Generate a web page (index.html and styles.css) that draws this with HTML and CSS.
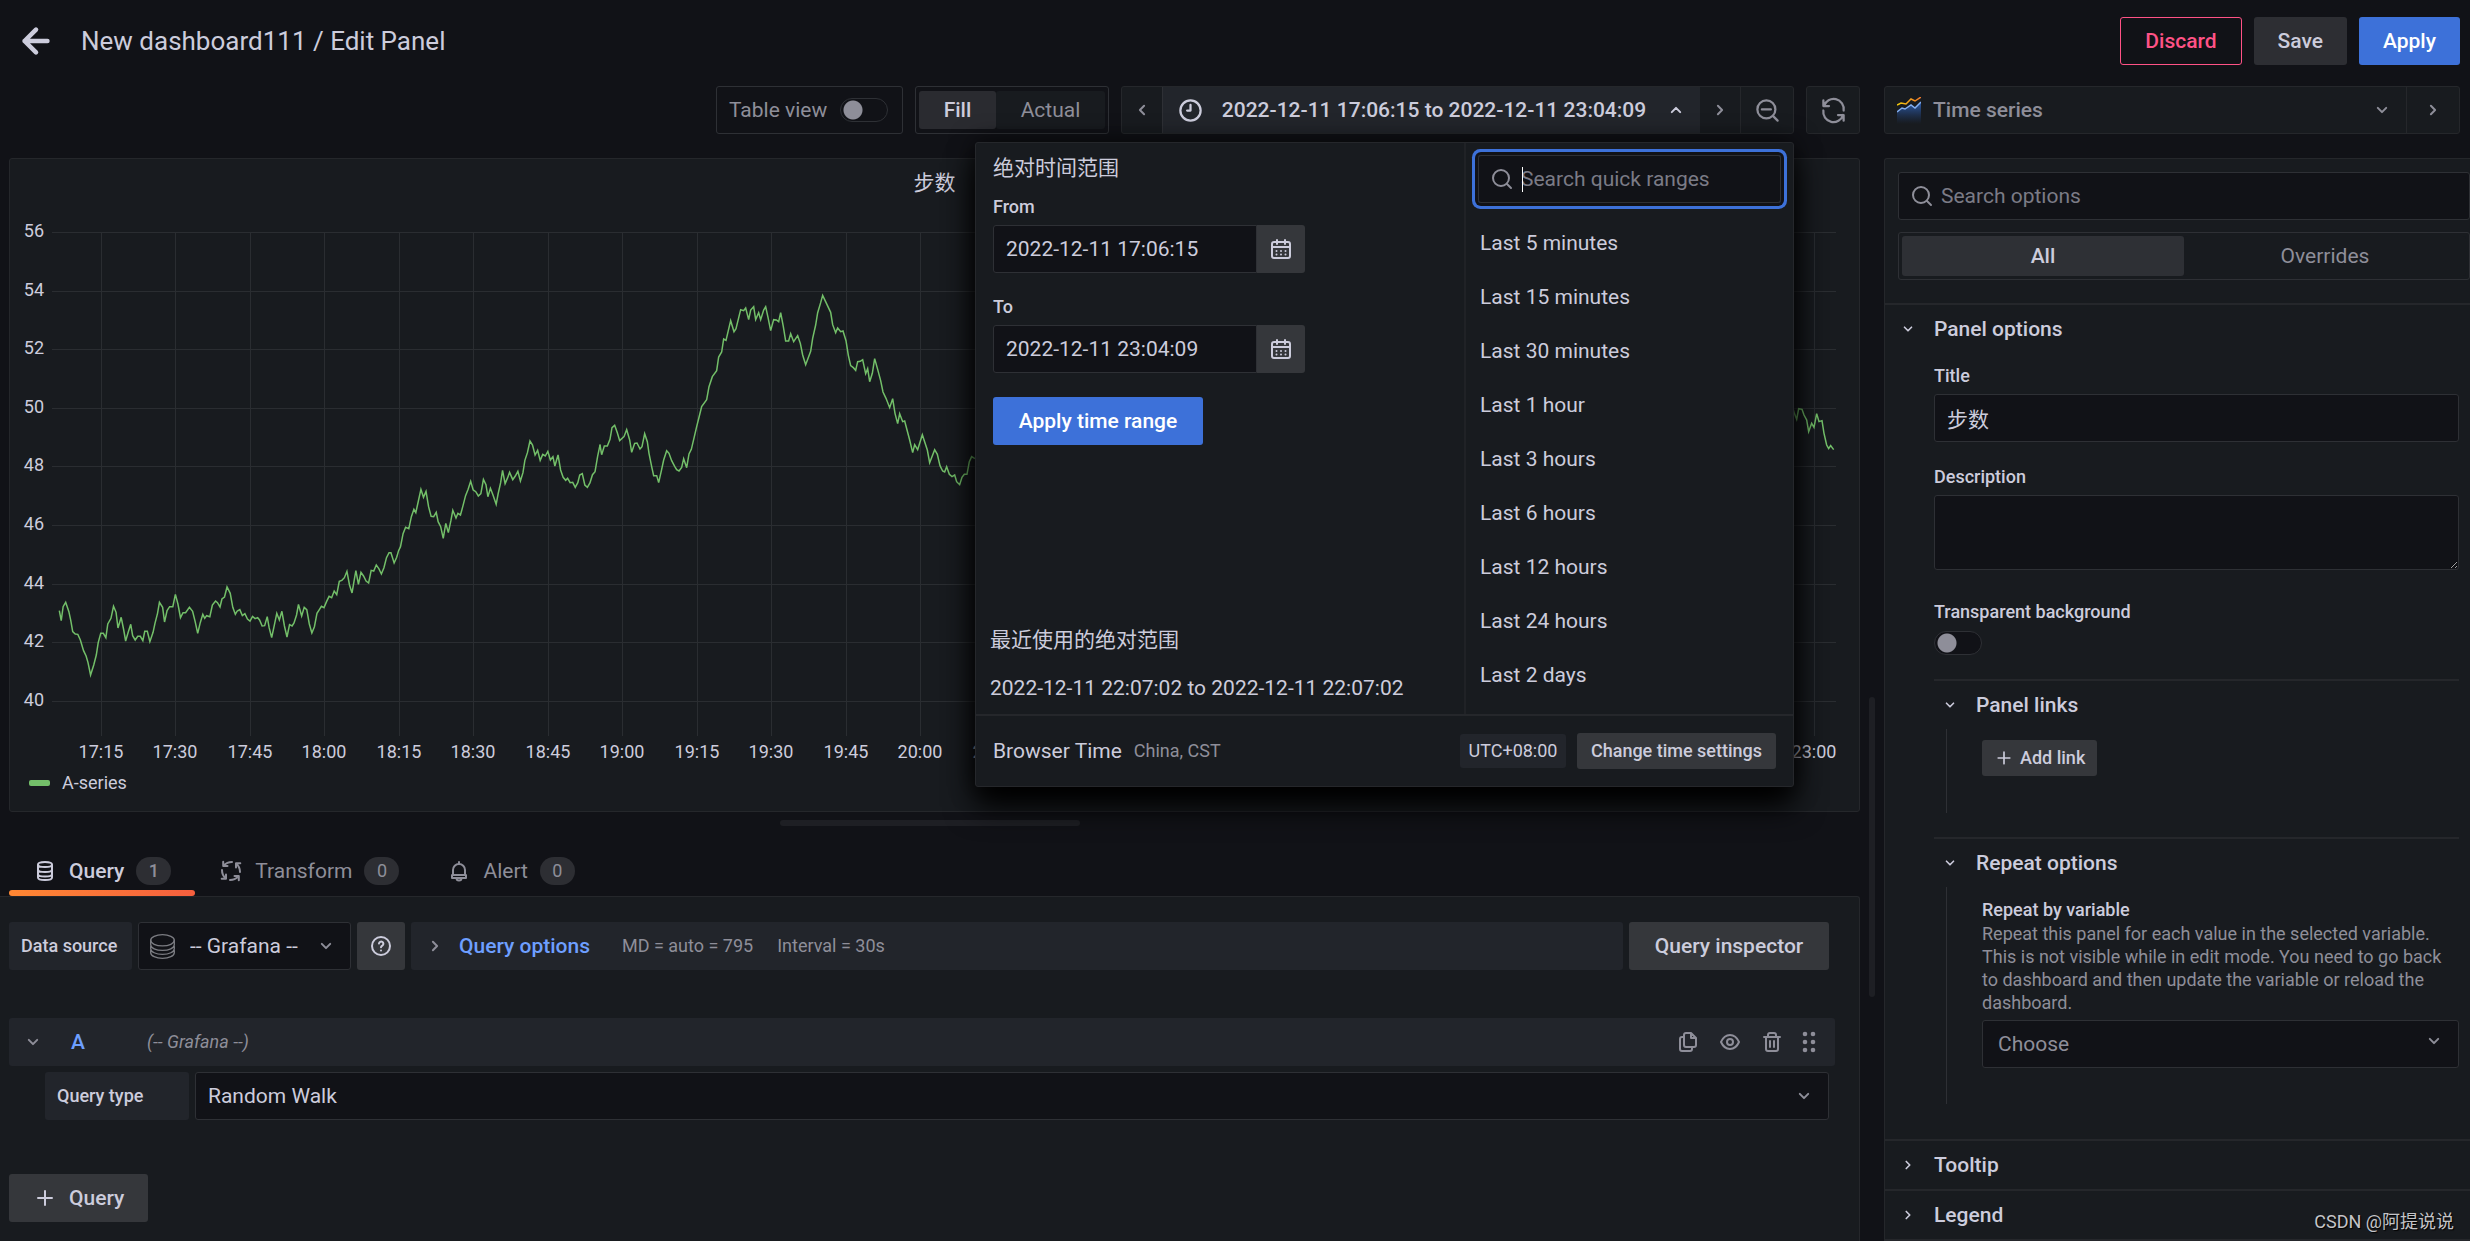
FILE: index.html
```html
<!DOCTYPE html>
<html lang="en">
<head>
<meta charset="utf-8">
<meta name="viewport" content="width=device-width, initial-scale=1">
<title>New dashboard111 / Edit Panel</title>
<link rel="stylesheet" href="styles.css">
</head>
<body>
<svg class="sprite" aria-hidden="true">
  <symbol id="i-down" viewBox="0 0 24 24"><path d="M7.8 9.9 12 14.1l4.200-4.200"/></symbol>
  <symbol id="i-up" viewBox="0 0 24 24"><path d="M7.800 14.100 12 9.900l4.200 4.200"/></symbol>
  <symbol id="i-right" viewBox="0 0 24 24"><path d="M9.900 7.800 14.100 12l-4.200 4.200"/></symbol>
  <symbol id="i-left" viewBox="0 0 24 24"><path d="M14.100 7.800 9.900 12l4.200 4.200"/></symbol>
  <symbol id="i-back" viewBox="5 5 14 14"><path d="M17 12H7m5-5-5 5 5 5"/></symbol>
  <symbol id="i-clock" viewBox="0 0 24 24"><circle cx="12" cy="12" r="9"/><path d="M12 7v5H9"/></symbol>
  <symbol id="i-search" viewBox="0 0 24 24"><circle cx="11" cy="11" r="8"/><path d="m17 17 4 4"/></symbol>
  <symbol id="i-zoomout" viewBox="0 0 24 24"><circle cx="11" cy="11" r="8"/><path d="m17 17 4 4M7 11h8"/></symbol>
  <symbol id="i-sync" viewBox="0 0 24 24"><path d="M3 3v5h5M3.500 8A9 9 0 0 1 21 12M3 12a9 9 0 0 0 17.500 4M16 16h5v5"/></symbol>
  <symbol id="i-calendar" viewBox="0 0 24 24"><path d="M5 5h14a2 2 0 0 1 2 2v12a2 2 0 0 1-2 2H5a2 2 0 0 1-2-2V7a2 2 0 0 1 2-2ZM3 10h18M8 3v4M16 3v4"/><path d="M7.500 14h.01M12 14h.01M16.500 14h.01M7.500 17.500h.01M12 17.500h.01M16.500 17.500h.01"/></symbol>
  <symbol id="i-database" viewBox="0 0 24 24"><path d="M5 5.500C5 4 8 3 12 3s7 1 7 2.500S16 8 12 8 5 7 5 5.500ZM5 5.500v13C5 20 8 21 12 21s7-1 7-2.500v-13M5 10.500c0 1.500 3 2.500 7 2.500s7-1 7-2.500M5 15c0 1.500 3 2.500 7 2.500s7-1 7-2.500"/></symbol>
  <symbol id="i-process" viewBox="0 0 24 24">
    <path id="turn" d="M4.200 2.700V7h4.300M4.700 6.600C6.800 4.300 9.300 3 13 3"/>
    <use href="#turn" transform="rotate(90 12 12)"/>
    <use href="#turn" transform="rotate(180 12 12)"/>
    <use href="#turn" transform="rotate(270 12 12)"/>
  </symbol>
  <symbol id="i-bell" viewBox="0 0 24 24"><path d="M12 4V3M6 16v-5a6 6 0 0 1 12 0v5M5 16h14v3H5ZM9.500 19a2.500 2.500 0 0 0 5 0"/></symbol>
  <symbol id="i-help" viewBox="0 0 24 24"><circle cx="12" cy="12" r="9"/><path d="M10 9.500a2.200 2.200 0 1 1 3.500 2c-.9.600-1.500.900-1.500 1.700M12 16.500h.01"/></symbol>
  <symbol id="i-copy" viewBox="0 0 24 24"><path d="M10 3h5l5 5v7a2 2 0 0 1-2 2h-8a2 2 0 0 1-2-2V5a2 2 0 0 1 2-2ZM15 3v5h5M8 7H6a2 2 0 0 0-2 2v10a2 2 0 0 0 2 2h8a2 2 0 0 0 2-2v-2"/></symbol>
  <symbol id="i-eye" viewBox="0 0 24 24"><path d="M3 12c2-4.500 5.200-7 9-7s7 2.500 9 7c-2 4.500-5.200 7-9 7s-7-2.500-9-7Z"/><circle cx="12" cy="12" r="3"/></symbol>
  <symbol id="i-trash" viewBox="0 0 24 24"><path d="M4 7h16M8 7V5a2 2 0 0 1 2-2h4a2 2 0 0 1 2 2v2M6 7v12a2 2 0 0 0 2 2h8a2 2 0 0 0 2-2V7M10 11v6M14 11v6"/></symbol>
  <symbol id="i-drag" viewBox="0 0 24 24"><g fill="currentColor" stroke="none"><circle cx="8" cy="4" r="2.300"/><circle cx="16" cy="4" r="2.300"/><circle cx="8" cy="12" r="2.300"/><circle cx="16" cy="12" r="2.300"/><circle cx="8" cy="20" r="2.300"/><circle cx="16" cy="20" r="2.300"/></g></symbol>
  <symbol id="i-plus" viewBox="0 0 24 24"><path d="M12 5v14M5 12h14"/></symbol>
  <symbol id="i-stack" viewBox="0 0 24 24"><g stroke-width="1.200"><ellipse cx="12" cy="6.500" rx="10.500" ry="5"/><path d="M1.500 6.500v4c0 2.800 4.700 5 10.500 5s10.500-2.200 10.500-5v-4M1.500 12v2c0 2.800 4.700 5 10.500 5s10.500-2.200 10.500-5v-2M1.500 15.500v2c0 2.800 4.700 5 10.500 5s10.500-2.200 10.500-5v-2"/></g></symbol>
</svg>

<header class="topbar">
  <a class="back" href="#" aria-label="Back"><svg class="icon icon-xl"><use href="#i-back"/></svg></a>
  <h1 class="page-title">New dashboard111 / Edit Panel</h1>
  <div class="actions">
    <button class="btn btn-danger">Discard</button>
    <button class="btn btn-dark">Save</button>
    <button class="btn btn-primary">Apply</button>
  </div>
</header>

<main class="editor">
  <section class="left">
    <div class="toolbar">
      <label class="table-view">Table view <input class="switch" type="checkbox"></label>
      <div class="toggle-group">
        <button class="toggle active">Fill</button>
        <button class="toggle">Actual</button>
      </div>
      <div class="time-nav">
        <button class="nav-btn" aria-label="Earlier"><svg class="icon"><use href="#i-left"/></svg></button>
        <button class="nav-range"><svg class="icon icon-lg"><use href="#i-clock"/></svg><span>2022-12-11 17:06:15 to 2022-12-11 23:04:09</span><svg class="icon"><use href="#i-up"/></svg></button>
        <button class="nav-btn" aria-label="Later"><svg class="icon"><use href="#i-right"/></svg></button>
        <button class="nav-btn nav-zoom" aria-label="Zoom out"><svg class="icon icon-lg"><use href="#i-zoomout"/></svg></button>

        <div class="picker">
          <div class="picker-body">
            <div class="picker-abs">
              <h2 class="picker-title">绝对时间范围</h2>
              <label class="label" for="from">From</label>
              <div class="date-row"><input class="input" id="from" value="2022-12-11 17:06:15"><button class="cal" aria-label="Calendar"><svg class="icon"><use href="#i-calendar"/></svg></button></div>
              <label class="label" for="to">To</label>
              <div class="date-row"><input class="input" id="to" value="2022-12-11 23:04:09"><button class="cal" aria-label="Calendar"><svg class="icon"><use href="#i-calendar"/></svg></button></div>
              <button class="btn btn-primary btn-range">Apply time range</button>
              <div class="recent">
                <h2 class="picker-title">最近使用的绝对范围</h2>
                <a href="#">2022-12-11 22:07:02 to 2022-12-11 22:07:02</a>
              </div>
            </div>
            <div class="picker-quick">
              <div class="search focused"><svg class="icon"><use href="#i-search"/></svg><span class="caret"></span><input class="input" aria-label="Search quick ranges" placeholder="Search quick ranges"></div>
              <ul class="ranges">
                <li><a href="#">Last 5 minutes</a></li>
                <li><a href="#">Last 15 minutes</a></li>
                <li><a href="#">Last 30 minutes</a></li>
                <li><a href="#">Last 1 hour</a></li>
                <li><a href="#">Last 3 hours</a></li>
                <li><a href="#">Last 6 hours</a></li>
                <li><a href="#">Last 12 hours</a></li>
                <li><a href="#">Last 24 hours</a></li>
                <li><a href="#">Last 2 days</a></li>
              </ul>
            </div>
          </div>
          <div class="picker-foot">
            <span>Browser Time</span><span class="zone">China, CST</span>
            <span class="utc">UTC+08:00</span>
            <button class="btn btn-grey btn-small">Change time settings</button>
          </div>
        </div>
      </div>
      <button class="refresh" aria-label="Refresh"><svg class="icon icon-lg"><use href="#i-sync"/></svg></button>
    </div>

    <div class="panel">
      <h2 class="panel-title">步数</h2>
      <svg class="chart" viewBox="10 212 1849 554" role="img" aria-label="A-series">
        <path class="grid" d="M52 232.500H1836M52 291.500H1836M52 349.500H1836M52 408.500H1836M52 466.500H1836M52 525.500H1836M52 584.500H1836M52 642.500H1836M52 701.500H1836
          M101.500 232V736M175.500 232V736M250.500 232V736M324.500 232V736M399.500 232V736M473.500 232V736M548.500 232V736M622.500 232V736M697.500 232V736M771.500 232V736M846.500 232V736M920.500 232V736M995.500 232V736M1069.500 232V736M1144.500 232V736M1218.500 232V736M1293.500 232V736M1367.500 232V736M1442.500 232V736M1516.500 232V736M1591.500 232V736M1665.500 232V736M1740.500 232V736M1814.500 232V736"/>
        <g class="tick tick-y">
          <text x="44" y="237">56</text><text x="44" y="296">54</text><text x="44" y="354">52</text><text x="44" y="413">50</text><text x="44" y="471">48</text><text x="44" y="530">46</text><text x="44" y="589">44</text><text x="44" y="647">42</text><text x="44" y="706">40</text>
        </g>
        <g class="tick tick-x">
          <text x="101" y="758">17:15</text><text x="175" y="758">17:30</text><text x="250" y="758">17:45</text><text x="324" y="758">18:00</text><text x="399" y="758">18:15</text><text x="473" y="758">18:30</text><text x="548" y="758">18:45</text><text x="622" y="758">19:00</text><text x="697" y="758">19:15</text><text x="771" y="758">19:30</text><text x="846" y="758">19:45</text><text x="920" y="758">20:00</text><text x="995" y="758">20:15</text><text x="1814" y="758">23:00</text>
        </g>
        <g class="series">
          <polyline transform="translate(0 400) scale(.63776 .33333)" points="93,632 96,662 99,620 103,607 108,635 111,662 114,695 118,702 122,703 126,720 131,752 135,768 138,788 142,825 147,795 151,765 154,728 158,700 162,700 166,713 169,672 174,655 178,619 182,637 185,684 190,652 194,690 197,723 201,697 205,673 208,707 212,720 216,709 220,709 224,722 227,694 231,694 235,725 240,697 243,670 247,640 250,607 255,622 258,666 262,632 266,620 271,620 275,583 279,612 283,653 287,638 291,638 297,622 302,634 306,665 310,700 314,668 318,643 321,655 324,647 329,650 333,615 338,603 341,608 345,621 348,597 352,591 356,561 361,580 365,622 369,643 372,633 376,629 380,647 384,641 388,657 392,663 396,649 400,656 404,653 407,660 411,678 415,677 419,650 422,683 426,713 430,677 434,640 438,660 442,634 446,678 450,711 454,674 458,678 461,669 465,645 468,613 473,648 477,622 481,629 485,672 489,699 493,680 497,640 501,628 504,619 508,623 512,605 516,589 520,593 524,573 528,584 532,544 536,541 540,533 544,514 548,555 552,579 555,545 558,512 562,553 566,517 570,528 574,543 578,549 582,511 586,513 590,495 594,506 598,522 602,503 606,473 610,458 613,458 618,489 622,472 625,452 628,440 632,401 636,382 641,386 645,350 649,328 652,338 656,303 660,268 664,292 668,274 672,320 676,349 680,350 684,337 687,365 691,380 695,415 699,370 703,398 707,362 710,331 715,354 718,340 722,345 726,317 730,287 734,268 738,244 742,270 746,275 750,288 754,281 758,238 762,254 765,290 769,265 773,285 778,313 781,282 785,248 788,211 792,251 796,233 799,217 804,239 808,228 812,214 816,243 820,218 823,181 827,158 831,123 835,135 839,165 843,151 847,181 851,163 855,168 859,154 863,180 867,170 870,198 875,165 879,210 883,232 887,241 890,235 894,248 898,247 902,262 906,248 909,225 913,221 917,255 921,262 925,249 929,224 933,215 937,170 941,133"/>
          <polyline transform="translate(600 280) scale(.33333)" points="0,495 5,524 13,498 22,498 30,478 36,443 44,436 52,458 59,482 72,470 80,449 89,480 95,517 104,490 111,489 120,507 126,500 134,461 142,485 147,520 155,560 161,587 170,587 176,608 185,568 191,540 200,512 207,520 215,542 224,559 230,569 237,573 245,562 251,536 260,563 267,522 274,508 283,470 290,440 298,408 305,380 320,359 327,320 337,290 350,272 356,231 365,216 371,177 378,181 392,122 402,155 408,146 422,89 431,92 437,84 446,119 452,90 461,80 467,119 476,98 482,119 491,90 497,80 504,112 512,152 521,119 529,120 536,125 542,98 550,140 557,183 566,183 572,161 581,185 593,167 601,190 608,225 617,254 632,214 638,175 647,135 653,98 662,68 668,46 692,97 698,134 707,158 713,144 722,155 729,153 738,182 745,226 752,257 760,263 767,271 773,245 781,244 788,239 797,281 803,266 809,305 817,280 824,236 833,268 842,302 849,336 858,355 869,383 878,356 885,400 893,431 899,401 908,425 914,423 929,480 938,518 944,494 953,509 967,464 982,510 989,548 1004,509 1012,523 1020,557 1028,573 1034,576 1040,560 1048,583 1056,590 1064,585 1070,605 1079,614 1086,592 1093,583 1101,583 1108,545 1115,530 1125,536"/>
          <polyline transform="translate(1460 60) scale(.33333)" points="995,1030 1003,1060 1010,1078 1016,1046 1026,1048 1032,1065 1040,1080 1046,1115 1055,1090 1062,1102 1070,1061 1077,1085 1086,1082 1092,1120 1100,1155 1106,1166 1112,1157 1121,1169"/>
        </g>
      </svg>
      <div class="legend"><span class="swatch"></span>A-series</div>
    </div>

    <div class="split-h"></div>

    <nav class="tabs">
      <a class="tab active" href="#"><svg class="icon"><use href="#i-database"/></svg>Query<span class="count">1</span></a>
      <a class="tab" href="#"><svg class="icon"><use href="#i-process"/></svg>Transform<span class="count">0</span></a>
      <a class="tab" href="#"><svg class="icon"><use href="#i-bell"/></svg>Alert<span class="count">0</span></a>
    </nav>

    <div class="query-pane">
      <div class="source-row">
        <label class="tag tag-ds" for="ds">Data source</label>
        <div class="select select-ds">
          <svg class="icon icon-lg lead"><use href="#i-stack"/></svg>
          <select class="input" id="ds"><option>-- Grafana --</option></select>
          <svg class="icon arrow"><use href="#i-down"/></svg>
        </div>
        <button class="help" aria-label="Help"><svg class="icon"><use href="#i-help"/></svg></button>
        <div class="options-bar">
          <svg class="icon"><use href="#i-right"/></svg>
          <a href="#">Query options</a>
          <span>MD = auto = 795</span>
          <span>Interval = 30s</span>
        </div>
        <button class="btn btn-grey btn-inspect">Query inspector</button>
      </div>

      <div class="query-head">
        <svg class="icon"><use href="#i-down"/></svg>
        <a class="ref-id" href="#">A</a>
        <em>(-- Grafana --)</em>
        <div class="query-tools">
          <button aria-label="Duplicate"><svg class="icon"><use href="#i-copy"/></svg></button>
          <button aria-label="Hide"><svg class="icon"><use href="#i-eye"/></svg></button>
          <button aria-label="Remove"><svg class="icon"><use href="#i-trash"/></svg></button>
        </div>
        <button class="grip" aria-label="Move"><svg class="icon"><use href="#i-drag"/></svg></button>
      </div>
      <div class="type-row">
        <label class="tag" for="qt">Query type</label>
        <div class="select">
          <select class="input" id="qt"><option>Random Walk</option></select>
          <svg class="icon arrow"><use href="#i-down"/></svg>
        </div>
      </div>
      <button class="btn btn-grey btn-add"><svg class="icon"><use href="#i-plus"/></svg>Query</button>
    </div>
  </section>

  <div class="split-v"><div class="handle"></div></div>

  <aside class="right">
    <div class="viz">
      <button class="viz-name">
        <svg class="viz-icon" viewBox="0 0 24 27">
          <defs>
            <linearGradient id="area" x1="0" y1="0" x2="0" y2="1"><stop offset="0" stop-color="#2f5fae"/><stop offset="1" stop-color="#1f3c70" stop-opacity="0"/></linearGradient>
            <linearGradient id="line" x1="0" y1="0" x2="1" y2="0"><stop offset="0" stop-color="#f2cc0c"/><stop offset="1" stop-color="#f0772b"/></linearGradient>
          </defs>
          <path fill="url(#area)" d="m0 15 5-4 3 1 6-4 4 3 6-6v22H0Z"/>
          <path fill="none" stroke="#84aff1" stroke-width="1.500" d="m0 15 5-4 3 1 6-4 4 3 6-6"/>
          <path fill="none" stroke="url(#line)" stroke-width="1.500" d="m0 8 4-2 5 1 5-5 4 2 6-4"/>
        </svg>
        Time series
        <svg class="icon"><use href="#i-down"/></svg>
      </button>
      <button class="viz-more" aria-label="Show suggestions"><svg class="icon"><use href="#i-right"/></svg></button>
    </div>

    <div class="options">
      <div class="options-head">
        <div class="search"><svg class="icon"><use href="#i-search"/></svg><input class="input" aria-label="Search options" placeholder="Search options"></div>
        <div class="toggle-group wide">
          <button class="toggle active">All</button>
          <button class="toggle">Overrides</button>
        </div>
      </div>

      <section class="group">
        <button class="group-title"><svg class="icon icon-sm"><use href="#i-down"/></svg>Panel options</button>
        <div class="group-body">
          <label class="label" for="title">Title</label>
          <input class="input" id="title" value="步数">
          <label class="label" for="desc">Description</label>
          <textarea class="input" id="desc"></textarea>
          <label class="label label-switch" for="transparent">Transparent background</label>
          <input class="switch" id="transparent" type="checkbox">

          <section class="subgroup">
            <button class="group-title"><svg class="icon icon-sm"><use href="#i-down"/></svg>Panel links</button>
            <div class="sub-body">
              <button class="btn btn-grey btn-small"><svg class="icon icon-sm"><use href="#i-plus"/></svg>Add link</button>
            </div>
          </section>
          <section class="subgroup">
            <button class="group-title"><svg class="icon icon-sm"><use href="#i-down"/></svg>Repeat options</button>
            <div class="sub-body">
              <label class="label" for="repeat">Repeat by variable</label>
              <p class="hint">Repeat this panel for each value in the selected variable. This is not visible while in edit mode. You need to go back to dashboard and then update the variable or reload the dashboard.</p>
              <div class="select muted">
                <select class="input" id="repeat"><option>Choose</option></select>
                <svg class="icon arrow"><use href="#i-down"/></svg>
              </div>
            </div>
          </section>
        </div>
      </section>
      <section class="group"><button class="group-title"><svg class="icon icon-sm"><use href="#i-right"/></svg>Tooltip</button></section>
      <section class="group"><button class="group-title"><svg class="icon icon-sm"><use href="#i-right"/></svg>Legend</button></section>
      <section class="group"></section>
    </div>
  </aside>
</main>
<div class="watermark">CSDN @阿提说说</div>
</body>
</html>
```
FILE: styles.css
```css
:root {
  --canvas: #111217;
  --surface: #181b1f;
  --raised: #22252b;
  --line: #25272b;
  --line-strong: #2e3035;
  --grey: #35373b;
  --text: #ccccdc;
  --muted: #8e8e99;
  --blue: #3d71d9;
  --link: #6e9fff;
}
* { box-sizing: border-box; }
body {
  margin: 0;
  height: 100vh;
  overflow: hidden;
  display: flex;
  flex-direction: column;
  background: var(--canvas);
  color: var(--text);
  font: 21px/32px Roboto, "Noto Sans CJK SC", sans-serif;
}
h1, h2, p, ul { margin: 0; padding: 0; font-size: inherit; font-weight: 400; list-style: none; }
a { color: inherit; text-decoration: none; }
button { margin: 0; padding: 0; border: 0; background: none; color: inherit; font: inherit; white-space: nowrap; }
.sprite { position: absolute; width: 0; height: 0; }
.icon {
  flex: none;
  width: 24px;
  height: 24px;
  fill: none;
  stroke: currentColor;
  stroke-width: 2;
  stroke-linecap: round;
  stroke-linejoin: round;
}
.icon-sm { width: 20px; height: 20px; }
.icon-lg { width: 27px; height: 27px; }
.icon-xl { width: 32px; height: 32px; }

/* Buttons and fields */
.btn {
  display: inline-flex;
  align-items: center;
  justify-content: center;
  gap: 12px;
  height: 48px;
  padding: 0 24px;
  border-radius: 3px;
  font-weight: 500;
}
.btn-primary { background: var(--blue); color: #fff; }
.btn-dark { background: #2d2e33; }
.btn-grey { background: var(--grey); }
.btn-danger { border: 1px solid #ff5286; color: #ff5286; }
.btn-small { height: 36px; padding: 0 12px; font-size: 18px; gap: 6px; }
.input {
  display: block;
  width: 100%;
  height: 48px;
  padding: 0 12px;
  border: 1px solid var(--line-strong);
  border-radius: 3px;
  background: var(--canvas);
  color: var(--text);
  font: inherit;
  appearance: none;
  outline: none;
}
.input::placeholder { color: #7b7b86; opacity: 1; }
.label { display: block; font-size: 18px; line-height: 24px; font-weight: 500; }
.search { position: relative; display: grid; align-items: center; }
.search > * { grid-area: 1 / 1; }
.search .icon { z-index: 1; margin-left: 12px; color: var(--muted); }
.search .input { padding-left: 42px; }
.search.focused { border-radius: 3px; box-shadow: 0 0 0 3px var(--canvas), 0 0 0 6px var(--blue); }
.caret { z-index: 1; width: 1px; height: 25px; margin-left: 44px; background: #fff; }
.select { display: grid; align-items: center; flex: 1; }
.select > * { grid-area: 1 / 1; }
.select .arrow { justify-self: end; margin-right: 13px; pointer-events: none; color: var(--muted); }
.select .lead { z-index: 1; margin-left: 11px; color: #7b7c82; pointer-events: none; }
.muted .input { color: var(--muted); padding-left: 15px; }
.switch {
  appearance: none;
  flex: none;
  display: block;
  width: 48px;
  height: 24px;
  margin: 0;
  border: 1px solid var(--line-strong);
  border-radius: 12px;
  background: radial-gradient(circle at 12px 11px, var(--muted) 9px, transparent 10px) var(--canvas);
}
.toggle-group { display: flex; height: 48px; padding: 4px 3px; border: 1px solid var(--line-strong); border-radius: 3px; }
.toggle { width: 109px; background: var(--surface); color: var(--muted); border-radius: 3px; }
.toggle.active { width: 77px; background: #2a2b30; color: var(--text); font-weight: 500; }
.toggle-group.wide { padding: 3px; }
.wide .toggle { flex: 1; }
.wide .toggle.active { background: #2e3035; }

/* Header */
.topbar { display: flex; align-items: center; padding: 17px 10px 21px 20px; }
.back { display: flex; }
.page-title { margin-left: 29px; font-size: 26px; }
.actions { display: flex; gap: 12px; margin-left: auto; }

.editor { flex: 1; min-height: 0; display: grid; grid-template-columns: minmax(0, 1fr) 24px 586px; }
.left { display: flex; flex-direction: column; min-height: 0; }

/* Toolbar over the chart */
.toolbar { display: flex; justify-content: flex-end; gap: 12px; margin-bottom: 24px; }
.table-view {
  display: flex;
  align-items: center;
  justify-content: space-between;
  width: 187px;
  height: 48px;
  padding: 0 14px 0 12px;
  border: 1px solid var(--line-strong);
  border-radius: 3px;
  color: var(--muted);
}
.time-nav { position: relative; display: flex; height: 48px; border: 1px solid var(--line); border-radius: 3px; background: var(--surface); }
.nav-btn { display: flex; align-items: center; justify-content: center; width: 40px; color: var(--muted); }
.nav-range { display: flex; align-items: center; gap: 12px; padding: 0 12px 0 14px; background: var(--raised); border-left: 1px solid var(--line-strong); font-weight: 500; }
.nav-range span { min-width: 436px; }
.nav-zoom { width: 53px; border-left: 1px solid var(--line); }
.refresh { display: flex; align-items: center; justify-content: center; width: 54px; border: 1px solid var(--line); border-radius: 3px; background: var(--surface); color: var(--muted); }

/* Time range popover */
.picker {
  position: absolute;
  z-index: 5;
  top: 55px;
  right: -1px;
  width: 819px;
  background: var(--surface);
  border: 1px solid var(--line);
  border-radius: 3px;
  box-shadow: 0 20px 30px #000000, 0 0 24px #000000b0;
}
.picker-body { display: grid; grid-template-columns: 490px 1fr; height: 573px; border-bottom: 2px solid var(--line); }
.picker-abs { display: flex; flex-direction: column; padding: 9px 17px 10px; border-right: 2px solid #202226; }
.picker-title { line-height: 32px; }
.picker-abs .label { margin: 11px 0 6px; }
.date-row { display: flex; width: 312px; }
.date-row + .label { margin-top: 22px; }
.date-row .input { border-radius: 3px 0 0 3px; }
.cal { display: flex; flex: none; align-items: center; justify-content: center; width: 48px; border-radius: 0 3px 3px 0; background: var(--grey); }
.btn-range { align-self: flex-start; width: 210px; margin-top: 24px; }
.recent { display: grid; gap: 16px; margin: auto 0 0 -3px; }
.picker-quick { padding: 12px; overflow: hidden; }
.ranges { margin-top: 13px; }
.ranges a { display: block; padding: 11px 2px; }
.picker-foot { display: flex; align-items: center; padding: 17px; }
.picker-foot .btn { width: 199px; }
.zone { margin-left: 12px; color: var(--muted); font-size: 18px; }
.utc { width: 106px; margin: 0 11px 0 auto; border-radius: 3px; background: var(--raised); font-size: 18px; line-height: 34px; text-align: center; }

/* Chart */
.panel { margin-left: 9px; padding-bottom: 11px; border: 1px solid var(--line); border-radius: 3px; background: var(--surface); }
.panel-title { text-align: center; line-height: 49px; height: 53px; }
.chart { display: block; width: 100%; }
.grid { fill: none; stroke: #2a2d31; }
.tick { fill: var(--text); font-size: 18px; }
.tick-y { text-anchor: end; }
.tick-x { text-anchor: middle; }
.series polyline { fill: none; stroke: #73bf69; stroke-width: 1.500px; vector-effect: non-scaling-stroke; }
.legend { display: flex; align-items: center; gap: 12px; padding-left: 19px; font-size: 18px; line-height: 34px; }
.swatch { width: 21px; height: 6px; border-radius: 2px; background: #73bf69; }
.split-h { flex: none; width: 300px; height: 6px; margin: 8px auto 20px; border-radius: 3px; background: #1e1f24; }
.split-v .handle { width: 6px; height: 300px; margin: 611px 0 0 9px; border-radius: 3px; background: #1e1f24; }
.split-h, .tabs { position: relative; }

/* Tabs */
.tabs { display: flex; padding-left: 9px; }
.tab { display: flex; align-items: center; gap: 12px; height: 50px; padding: 0 24px; color: var(--muted); }
.tab .count { min-width: 35px; border-radius: 14px; background: #2d2e33; font-size: 18px; line-height: 28px; text-align: center; color: var(--muted); }
.tab.active { position: relative; color: var(--text); font-weight: 500; }
.tab.active::after { content: ""; position: absolute; left: 0; right: 0; bottom: 0; height: 6px; border-radius: 3px; background: linear-gradient(90deg, #ff8833, #f55f3e); }

/* Query editor */
.query-pane { flex: 1; padding: 25px 24px 0 9px; border: 1px solid var(--line); border-width: 1px 1px 0 0; border-radius: 0 3px 0 0; background: var(--surface); }
.source-row { display: flex; gap: 6px; margin-right: 6px; }
.tag { display: flex; align-items: center; height: 48px; padding: 0 12px; border-radius: 3px; background: var(--raised); font-size: 18px; font-weight: 500; }
.tag-ds { width: 123px; }
.select-ds { flex: none; width: 213px; }
.select-ds .input { padding-left: 51px; }
.help { display: flex; align-items: center; justify-content: center; width: 48px; border-radius: 3px; background: var(--grey); }
.options-bar { flex: 1; display: flex; align-items: center; gap: 24px; padding-left: 12px; border-radius: 3px; background: var(--raised); color: var(--muted); font-size: 18px; }
.options-bar a { margin: 0 8px 0 -12px; color: var(--link); font-size: 21px; font-weight: 500; }
.btn-inspect { width: 200px; }
.query-head { display: flex; align-items: center; height: 48px; margin: 48px 0 6px; padding: 0 14px 0 12px; border-radius: 3px; background: var(--raised); color: var(--muted); font-size: 18px; }
.ref-id { width: 76px; margin-left: 26px; color: var(--link); font-size: 21px; font-weight: 500; }
.query-tools { display: flex; gap: 18px; margin: 0 13px 0 auto; }
.query-tools button, .grip { display: flex; }
.type-row { display: flex; gap: 6px; margin: 0 6px 54px 36px; }
.type-row .tag { width: 144px; }
.btn-add { padding: 0 24px; }

/* Options pane */
.right { display: flex; flex-direction: column; min-height: 0; }
.viz { display: flex; height: 48px; margin: 0 10px 24px 0; border: 1px solid var(--line); border-radius: 3px; background: var(--surface); color: var(--muted); }
.viz-name { flex: 1; display: flex; align-items: center; gap: 12px; padding: 0 12px; font-weight: 500; }
.viz-name .icon { margin-left: auto; }
.viz-icon { width: 24px; height: 27px; }
.viz-more { display: flex; align-items: center; justify-content: center; width: 53px; border-left: 1px solid var(--line); }
.options { flex: 1; min-height: 0; overflow: hidden; border: 1px solid var(--line); border-width: 1px 0 0 1px; border-radius: 3px 0 0 0; background: var(--surface); }
.options-head { display: grid; gap: 12px; padding: 13px 0 23px 13px; }
.group { border-top: 2px solid var(--line); }
.group-title { display: flex; align-items: center; gap: 16px; height: 48px; padding-left: 13px; font-weight: 500; }
.group-body { padding: 11px 11px 35px 49px; }
.group-body .input { margin-top: 6px; }
.group-body .input + .label { margin-top: 23px; }
.group-body textarea.input { height: 75px; color-scheme: dark; }
.group-body .input + .label-switch { margin-top: 30px; }
.group-body .switch { margin-top: 7px; }
.group-body .switch + .subgroup { margin-top: 24px; }
.subgroup { border-top: 2px solid var(--line); }
.subgroup .group-title { padding-left: 6px; }
.sub-body { margin: 0 0 24px 12px; padding: 11px 0 36px 35px; border-left: 1px solid var(--line-strong); }
.subgroup:last-child .sub-body { margin-bottom: 0; }
.hint { color: var(--muted); font-size: 18px; line-height: 23px; }
.watermark { position: absolute; right: 16px; bottom: 3px; color: #c4c4c8; font-size: 18px; text-shadow: 1px 1px 1px #000; }
```
